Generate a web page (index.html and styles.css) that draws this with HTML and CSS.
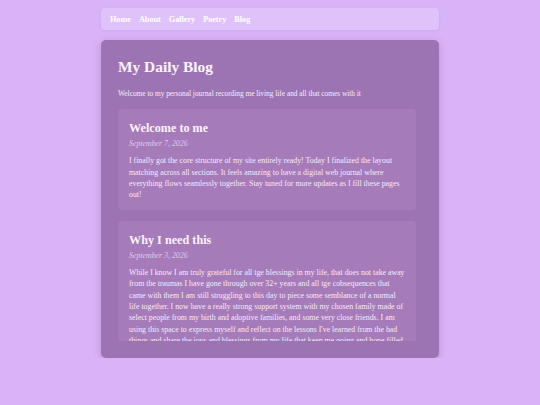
FILE: index.html
```html
<!DOCTYPE html>
<html lang="en">
<head>
<meta charset="utf-8">
<title>My Daily Blog</title>
<link rel="stylesheet" href="styles.css">
</head>
<body>
<div class="wrap">
	<nav class="nav">
		<a href="#">Home</a>
		<a href="#">About</a>
		<a href="#">Gallery</a>
		<a href="#">Poetry</a>
		<a href="#">Blog</a>
	</nav>
	<main class="main">
		<h1>My Daily Blog</h1>
		<p class="intro">Welcome to my personal journal recording me living life and all that comes with it</p>
		<div class="posts">
			<article class="post">
				<h2>Welcome to me</h2>
				<p class="date">September 7, 2026</p>
				<p>I finally got the core structure of my site entirely ready! Today I finalized the layout matching across all sections. It feels amazing to have a digital web journal where everything flows seamlessly together. Stay tuned for more updates as I fill these pages out!</p>
			</article>
			<article class="post">
				<h2>Why I need this</h2>
				<p class="date">September 3, 2026</p>
				<p>While I know I am truly grateful for all tge blessings in my life, that does not take away from the traumas I have gone through over 32+ years and all tge cobsequences that came with them I am still struggling to this day to piece some semblance of a normal life together. I now have a really strong support system with my chosen family made of select people from my birth and adoptive families, and some very close friends. I am using this space to express myself and reflect on the lessons I've learned from the bad things and share the joys and blessings from my life that keep me going and hope filled for what is still to come.</p>
			</article>
		</div>
	</main>
</div>
</body>
</html>
```

FILE: styles.css
```css
*{margin:0;padding:0;box-sizing:border-box;}
body{background:#d9b3f7;font-family:"Liberation Serif",Georgia,serif;color:#f6ecfb;}
.wrap{width:338px;margin:0 auto;padding-top:8px;}
.nav{display:flex;gap:8px;align-items:center;height:22px;padding:0 9px;background:#dfc2f9;border-radius:4px;box-shadow:0 1px 3px rgba(150,90,200,.15);}
.nav a{color:#fff;text-decoration:none;font-weight:bold;font-size:8.2px;}
.main{margin-top:10px;height:318px;padding:17px 23px 17px 17px;background:#9d74b3;border-radius:5px;box-shadow:0 2px 8px rgba(110,60,150,.3);display:flex;flex-direction:column;}
.main h1{font-size:15.4px;line-height:20px;color:#fbf4ff;}
.intro{font-size:7.35px;line-height:10px;margin-top:12px;}
.posts{flex:1;overflow:hidden;margin-top:10px;display:flex;flex-direction:column;gap:11px;}
.post{background:#a57bb9;border-radius:4px;padding:12px 11px 9px;flex-shrink:0;}
.post h2{font-size:12.2px;line-height:14px;color:#fbf4ff;}
.date{font-style:italic;font-size:6.8px;line-height:9px;margin-top:3px;color:#e2cdee;}
.post p{font-size:7.85px;line-height:11.35px;}
.post .date+p{margin-top:6px;}
```
